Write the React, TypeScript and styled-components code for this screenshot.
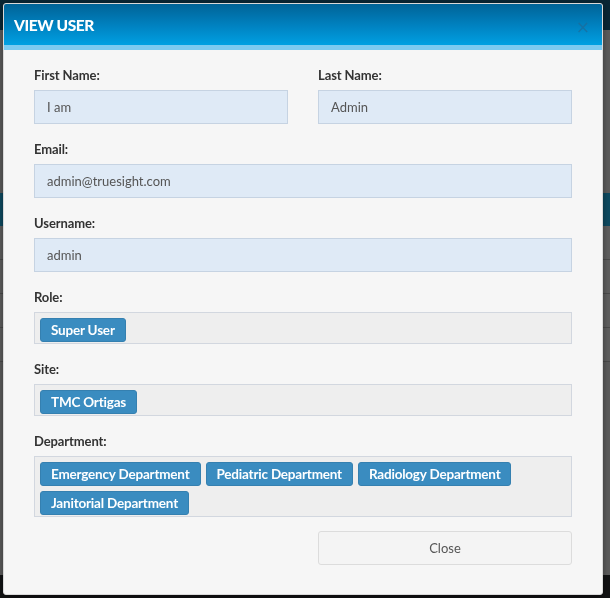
import React from "react";
import styled, { createGlobalStyle } from "styled-components";

const Global = createGlobalStyle`
  html, body { margin: 0; padding: 0; }
  body {
    font-family: "Lato", "Open Sans", sans-serif;
    width: 610px; height: 598px; overflow: hidden;
    background: #5a5a5a;
  }
`;

const Page = styled.div`
  width: 610px;
  height: 598px;
  display: flex;
  flex-direction: column;
  background: #5b5b5b;
`;

const TopBar = styled.div`
  height: 30px;
  background: #0a2634;
`;

const Spacer = styled.div<{ $h: number }>`
  height: ${(p) => p.$h}px;
`;

const TableHead = styled.div`
  height: 33px;
  background: #0e4a60;
`;

const TableRow = styled.div`
  height: 33px;
  border-bottom: 1px solid #4a4a4a;
  background: #5e5e5e;
`;

const Grow = styled.div`
  flex: 1;
`;

const Footer = styled.div`
  height: 23px;
  background: #121314;
`;

const Modal = styled.div`
  position: fixed;
  top: 3px;
  left: 3px;
  width: 600px;
  height: 592px;
  box-sizing: border-box;
  background: #f6f6f6;
  border: 1px solid #d9d9d9;
  border-radius: 3px;
  overflow: hidden;
  display: flex;
  flex-direction: column;
  box-shadow: 0 2px 6px rgba(0, 0, 0, 0.4);
`;

const Header = styled.div`
  box-sizing: border-box;
  height: 46px;
  flex: none;
  background: linear-gradient(to bottom, #006397 0%, #0083c2 55%, #00a0e2 100%);
  border-bottom: 5px solid #7ccaf0;
  display: flex;
  align-items: center;
  justify-content: space-between;
  padding: 0 12px 0 10px;
`;

const Title = styled.h4`
  margin: 0;
  color: #ffffff;
  font-family: "Lato", sans-serif;
  font-weight: 900;
  font-size: 15.5px;
  letter-spacing: -0.4px;
`;

const CloseX = styled.span`
  color: #1a6e9e;
  font-size: 17px;
  font-family: "DejaVu Sans", sans-serif;
  margin-top: 5px;
  opacity: 0.8;
`;

const Body = styled.div`
  padding: 16px 30px 30px 30px;
  display: flex;
  flex-direction: column;
`;

const Row = styled.div`
  display: grid;
  grid-template-columns: 1fr 1fr;
  column-gap: 30px;
`;

const Group = styled.div`
  display: flex;
  flex-direction: column;
  margin-bottom: 16px;
`;

const Label = styled.label`
  font-size: 13px;
  font-weight: 700;
  color: #333;
  height: 18px;
  line-height: 18px;
  margin-bottom: 6px;
  letter-spacing: -0.1px;
`;

const Input = styled.div`
  height: 34px;
  box-sizing: border-box;
  background: #dfeaf6;
  border: 1px solid #c6d3e2;
  padding: 0 12px;
  font-size: 13px;
  color: #555;
  display: flex;
  align-items: center;
`;

const TagBox = styled.div`
  min-height: 32px;
  box-sizing: border-box;
  background: #eeeeee;
  border: 1px solid #d2d7df;
  padding: 5px 5px 1px 5px;
  display: flex;
  flex-wrap: wrap;
  gap: 5px;
`;

const Tag = styled.span`
  height: 24px;
  box-sizing: border-box;
  background: #3a8cc0;
  border: 1px solid #3580b0;
  border-radius: 3px;
  color: #fff;
  font-size: 13.5px;
  font-weight: 700;
  padding: 0 10px;
  display: inline-flex;
  align-items: center;
  letter-spacing: -0.2px;
`;

const Footerbar = styled.div`
  display: grid;
  grid-template-columns: 1fr 1fr;
  column-gap: 30px;
  margin-top: -2px;
`;

const Button = styled.button`
  grid-column: 2;
  height: 34px;
  background: #f4f4f4;
  border: 1px solid #dcdcdc;
  border-radius: 3px;
  font-family: "Lato", sans-serif;
  font-size: 13px;
  color: #555;
`;

const departments = [
  "Emergency Department",
  "Pediatric Department",
  "Radiology Department",
  "Janitorial Department",
];

export default function App() {
  return (
    <>
      <Global />
      <Page>
        <TopBar />
        <Spacer $h={163} />
        <TableHead />
        <TableRow />
        <TableRow />
        <TableRow />
        <TableRow />
        <Grow />
        <Footer />
      </Page>
      <Modal>
        <Header>
          <Title>VIEW USER</Title>
          <CloseX>×</CloseX>
        </Header>
        <Body>
          <Row>
            <Group>
              <Label>First Name:</Label>
              <Input>I am</Input>
            </Group>
            <Group>
              <Label>Last Name:</Label>
              <Input>Admin</Input>
            </Group>
          </Row>
          <Group>
            <Label>Email:</Label>
            <Input>admin@truesight.com</Input>
          </Group>
          <Group>
            <Label>Username:</Label>
            <Input>admin</Input>
          </Group>
          <Group>
            <Label>Role:</Label>
            <TagBox>
              <Tag>Super User</Tag>
            </TagBox>
          </Group>
          <Group>
            <Label>Site:</Label>
            <TagBox>
              <Tag>TMC Ortigas</Tag>
            </TagBox>
          </Group>
          <Group>
            <Label>Department:</Label>
            <TagBox>
              {departments.map((d) => (
                <Tag key={d}>{d}</Tag>
              ))}
            </TagBox>
          </Group>
          <Footerbar>
            <Button>Close</Button>
          </Footerbar>
        </Body>
      </Modal>
    </>
  );
}
